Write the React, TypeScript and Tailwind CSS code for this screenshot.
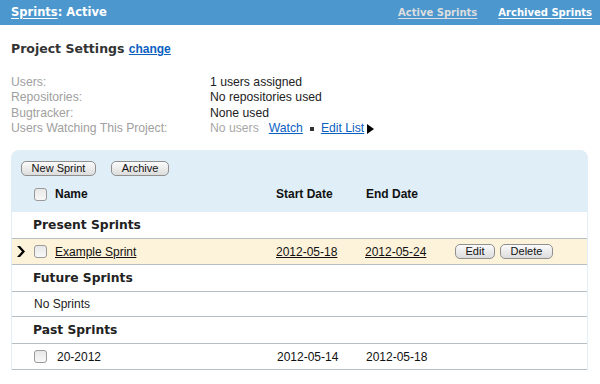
const sans = "font-['Liberation_Sans',Arial,sans-serif]";
const deja = "font-['DejaVu_Sans',Verdana,sans-serif]";

function Btn({ label, className = "" }: { label: string; className?: string }) {
  return (
    <button
      className={`h-[15px] rounded-[5px] border border-[#8f8f8f] bg-gradient-to-b from-[#fbfbfb] to-[#dcdcdc] text-[11px] leading-[13px] text-[#111] ${sans} ${className}`}
    >
      {label}
    </button>
  );
}

function Check() {
  return (
    <span className="block h-[13px] w-[13px] rounded-[3px] border border-[#9a9a9a] bg-gradient-to-b from-[#e8e8e8] to-[#f8f8f8]" />
  );
}

function SectionRow({ title }: { title: string }) {
  return (
    <div className={`flex h-[27px] items-center border-b border-[#b5bfc4] bg-white pl-[21px] text-[12.3px] font-bold text-[#222] ${deja}`}>
      {title}
    </div>
  );
}

export default function App() {
  const info = [
    ["Users:", "1 users assigned"],
    ["Repositories:", "No repositories used"],
    ["Bugtracker:", "None used"],
  ];
  return (
    <div className={`h-[384px] w-[600px] bg-white ${sans}`}>
      <div className="flex h-[25px] items-center justify-between bg-[#4b97ce] pl-[11px] pr-[8px] text-white">
        <div className={`text-[11.5px] font-bold ${deja}`}>
          <a href="#" className="underline underline-offset-2">Sprints</a>: Active
        </div>
        <div className={`flex gap-[21px] text-[10px] font-bold ${deja}`}>
          <a href="#" className="text-[#dedede] underline underline-offset-2">Active Sprints</a>
          <a href="#" className="underline underline-offset-2">Archived Sprints</a>
        </div>
      </div>

      <div className="px-[11px] pt-[15px]">
        <h2 className={`text-[12.5px] font-bold leading-[18px] text-[#333] ${deja}`}>
          Project Settings{" "}
          <a href="#" className={`text-[12px] text-[#0b5fc0] underline ${sans}`}>change</a>
        </h2>

        <div className="mt-[17px] text-[12.2px] leading-[15.3px]">
          {info.map(([k, v]) => (
            <div key={k} className="flex">
              <div className="w-[199px] text-[#a0a0a0]">{k}</div>
              <div className="text-[#222]">{v}</div>
            </div>
          ))}
          <div className="flex">
            <div className="w-[199px] text-[#a0a0a0]">Users Watching This Project:</div>
            <div className="flex items-center">
              <span className="text-[#a8a8a8]">No users</span>
              <a href="#" className="ml-[10px] text-[#0b5fc0] underline">Watch</a>
              <span className="mx-[7px] block h-[4px] w-[4px] bg-[#333]" />
              <a href="#" className="text-[#0b5fc0] underline">Edit List</a>
              <svg width="7" height="10" viewBox="0 0 7 10" className="ml-[3px]">
                <path d="M0 0 L7 5 L0 10 Z" fill="#000" />
              </svg>
            </div>
          </div>
        </div>

        <div className="mt-[14px] mr-[1px] rounded-t-[8px] bg-[#e0eef8] pb-0">
          <div className="flex gap-[15px] px-[10px] pt-[11px]">
            <Btn label="New Sprint" className="w-[75px]" />
            <Btn label="Archive" className="w-[58px]" />
          </div>
          <div className="flex h-[36px] items-center text-[12px] font-bold text-[#111]">
            <div className="pl-[23px]"><Check /></div>
            <div className="ml-[8px] w-[221px]">Name</div>
            <div className="w-[90px]">Start Date</div>
            <div>End Date</div>
          </div>
          <div className="border-l border-r border-[#e0eef8]">
            <SectionRow title="Present Sprints" />
            <div className="flex h-[26px] items-center border-b border-[#b5bfc4] bg-[#fdf3da] text-[12px] text-[#111]">
              <svg width="8" height="11" viewBox="0 0 8 11" className="ml-[5px]">
                <path d="M0 0 H3 L8 5.5 L3 11 H0 L5 5.5 Z" fill="#000" />
              </svg>
              <div className="ml-[9px]"><Check /></div>
              <a href="#" className="ml-[8px] w-[221px] underline">Example Sprint</a>
              <a href="#" className="w-[89px] underline">2012-05-18</a>
              <a href="#" className="w-[90px] underline">2012-05-24</a>
              <div className="flex gap-[5px]">
                <Btn label="Edit" className="w-[40px]" />
                <Btn label="Delete" className="w-[53px]" />
              </div>
            </div>
            <SectionRow title="Future Sprints" />
            <div className="flex h-[25px] items-center border-b border-[#b5bfc4] bg-white pl-[22px] text-[12px] text-[#222]">
              No Sprints
            </div>
            <SectionRow title="Past Sprints" />
            <div className="flex h-[26px] items-center border-b border-[#b5bfc4] bg-white text-[12px] text-[#111]">
              <div className="ml-[22px]"><Check /></div>
              <div className="ml-[10px] w-[220px]">20-2012</div>
              <div className="w-[89px]">2012-05-14</div>
              <div>2012-05-18</div>
            </div>
          </div>
        </div>
      </div>
    </div>
  );
}
